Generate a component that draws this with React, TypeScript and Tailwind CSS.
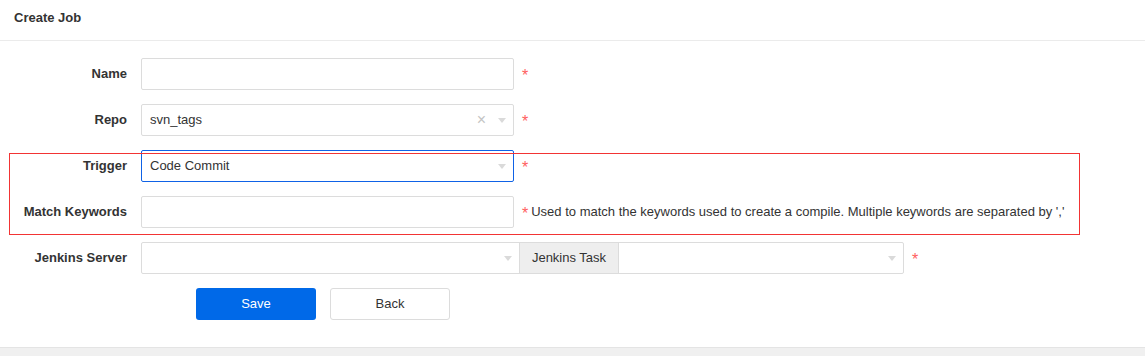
import { ReactNode } from 'react'

function Asterisk() {
  return <span className="text-[#ff5e5e] text-[16px] leading-none mt-[3px]">*</span>
}

function Caret() {
  return (
    <svg width="8" height="5" viewBox="0 0 8 5" className="shrink-0">
      <path d="M0 0 L8 0 L4 5 Z" fill="#dadada" />
    </svg>
  )
}

function Row({ label, children }: { label: string; children: ReactNode }) {
  return (
    <div className="flex items-center h-8">
      <label className="w-[127px] shrink-0 text-right font-bold text-[13px] text-[#333]">{label}</label>
      <div className="ml-[14px] flex items-center gap-2">{children}</div>
    </div>
  )
}

export default function App() {
  return (
    <div className="bg-white font-['Liberation_Sans',Arial,sans-serif] text-[#333] text-[13px]">
      {/* Header */}
      <div className="h-[41px] flex items-center px-[14px] border-b border-[#ebebeb]">
        <h3 className="font-bold text-[13px] text-[#333] -mt-[4px]">Create Job</h3>
      </div>

      {/* Form */}
      <div className="relative pt-[17px] pb-[27px]">
        <div className="flex flex-col gap-[14px]">
          <Row label="Name">
            <input className="w-[373px] h-8 border border-[#dcdcdc] rounded-[2px] px-2 outline-none" />
            <Asterisk />
          </Row>

          <Row label="Repo">
            <div className="w-[373px] h-8 border border-[#dcdcdc] rounded-[2px] flex items-center pl-2 pr-[7px]">
              <span className="flex-1">svn_tags</span>
              <span className="text-[#c4c4c4] text-[16px] leading-none mr-[12px]">×</span>
              <Caret />
            </div>
            <Asterisk />
          </Row>

          <Row label="Trigger">
            <div className="w-[373px] h-8 border border-[#0f62e6] rounded-[2px] flex items-center pl-2 pr-[7px]">
              <span className="flex-1">Code Commit</span>
              <Caret />
            </div>
            <Asterisk />
          </Row>

          <Row label="Match Keywords">
            <input className="w-[373px] h-8 border border-[#dcdcdc] rounded-[2px] px-2 outline-none" />
            <span className="flex items-center gap-[3px]">
              <Asterisk />
              <span className="text-[13px] text-[#333]">
                Used to match the keywords used to create a compile. Multiple keywords are separated by ','
              </span>
            </span>
          </Row>

          <Row label="Jenkins Server">
            <div className="flex h-8 border border-[#dcdcdc] rounded-[2px]">
              <div className="w-[377px] flex items-center justify-end pr-[7px]">
                <Caret />
              </div>
              <div className="w-[100px] bg-[#eeeeee] border-x border-[#dcdcdc] flex items-center justify-center text-[#333]">
                Jenkins Task
              </div>
              <div className="w-[284px] flex items-center justify-end pr-[7px]">
                <Caret />
              </div>
            </div>
            <Asterisk />
          </Row>

          <div className="flex gap-[14px] pl-[196px]">
            <button className="w-[120px] h-8 rounded-[3px] bg-[#0069e8] text-white text-[13px]">Save</button>
            <button className="w-[120px] h-8 rounded-[3px] border border-[#dcdcdc] bg-white text-[#333] text-[13px]">
              Back
            </button>
          </div>
        </div>

        {/* annotation highlight */}
        <div className="absolute left-[9px] top-[112px] w-[1071px] h-[82px] border border-[#f23434] pointer-events-none" />
      </div>

      <div className="h-[20px] bg-[#f0f0f0] border-t border-[#e4e4e4]" />
    </div>
  )
}
